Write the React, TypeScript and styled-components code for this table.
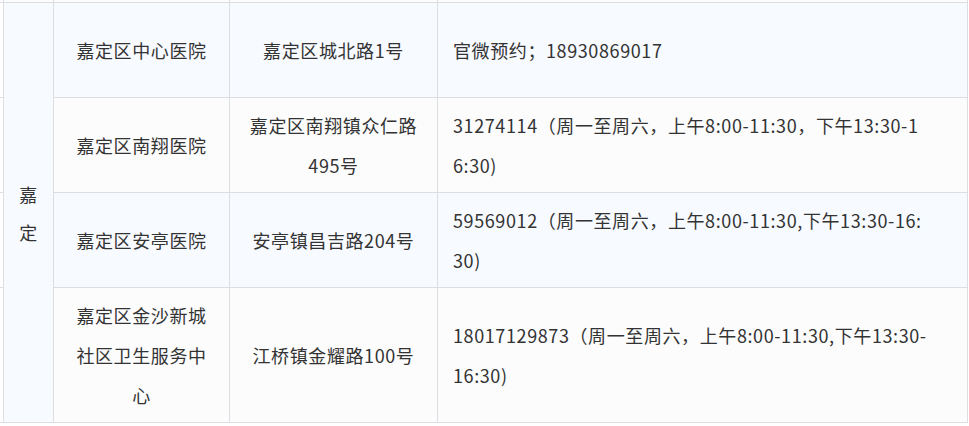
import React from 'react'
import styled, { createGlobalStyle } from 'styled-components'

const GlobalStyle = createGlobalStyle`
  html, body {
    margin: 0;
    padding: 0;
    background: #ffffff;
  }
  body {
    font-family: "Noto Sans CJK SC", "Microsoft YaHei", sans-serif;
    color: #333333;
    overflow: hidden;
  }
`

interface Hospital {
  name: string
  address: string
  phone: string
}

const hospitals: Hospital[] = [
  { name: '嘉定区中心医院', address: '嘉定区城北路1号', phone: '官微预约；18930869017' },
  {
    name: '嘉定区南翔医院',
    address: '嘉定区南翔镇众仁路495号',
    phone: '31274114（周一至周六，上午8:00-11:30，下午13:30-16:30)',
  },
  {
    name: '嘉定区安亭医院',
    address: '安亭镇昌吉路204号',
    phone: '59569012（周一至周六，上午8:00-11:30,下午13:30-16:30)',
  },
  {
    name: '嘉定区金沙新城社区卫生服务中心',
    address: '江桥镇金耀路100号',
    phone: '18017129873（周一至周六，上午8:00-11:30,下午13:30-16:30)',
  },
]

const Viewport = styled.div`
  width: 969px;
  height: 426px;
  overflow: hidden;
`

const Table = styled.table`
  border-collapse: collapse;
  table-layout: fixed;
  width: 1024px;
  margin-left: -57px;
  margin-top: -1px;
  font-size: 18px;
  letter-spacing: 0.6px;
`

const Row = styled.tr<{ $tint: boolean }>`
  background: ${(p) => (p.$tint ? '#f7faff' : '#fcfcfd')};
`

const Cell = styled.td<{ $align?: 'left' | 'center' }>`
  border: 1px solid #dcdee2;
  padding: 7px 15px;
  line-height: 40px;
  text-align: ${(p) => p.$align ?? 'center'};
  vertical-align: middle;
  word-break: break-all;
`

const SpacerCell = styled.td`
  border: 1px solid #dcdee2;
  padding: 0;
  height: 2px;
  line-height: 0;
  background: #fcfcfd;
`

const BlankCell = styled.td`
  border: 1px solid #dcdee2;
  padding: 0;
  background: #ffffff;
`

const DistrictCell = styled.td`
  border: 1px solid #dcdee2;
  padding: 7px 15px;
  line-height: 38px;
  text-align: center;
  vertical-align: middle;
  background: #f7faff;
  word-break: break-all;
`

const PhoneCell = styled(Cell)`
  padding: 7px 38px 7px 15px;
`

const FirstRow = styled(Row)`
  height: 95px;
`

export default function App() {
  return (
    <Viewport>
      <GlobalStyle />
      <Table>
        <colgroup>
          <col style={{ width: 60 }} />
          <col style={{ width: 50 }} />
          <col style={{ width: 176 }} />
          <col style={{ width: 208 }} />
          <col style={{ width: 530 }} />
        </colgroup>
        <tbody>
          <tr>
            <SpacerCell />
            <SpacerCell />
            <SpacerCell />
            <SpacerCell />
            <SpacerCell />
          </tr>
          {hospitals.map((h, i) => {
            const RowKind = i === 0 ? FirstRow : Row
            return (
              <RowKind key={h.name} $tint={i % 2 === 0}>
                <BlankCell />
                {i === 0 && <DistrictCell rowSpan={hospitals.length}>嘉定</DistrictCell>}
                <Cell>{h.name}</Cell>
                <Cell>{h.address}</Cell>
                <PhoneCell $align="left">{h.phone}</PhoneCell>
              </RowKind>
            )
          })}
        </tbody>
      </Table>
    </Viewport>
  )
}
